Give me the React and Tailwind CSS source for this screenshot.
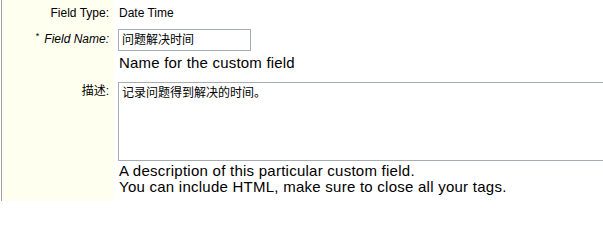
export default function App() {
  return (
    <div className="w-[603px] h-[201px] overflow-hidden bg-white pl-px" style={{ fontFamily: '"Liberation Sans", "Noto Sans CJK SC", sans-serif' }}>
      <div className="grid grid-cols-[112px_1fr] h-full border-l border-[#a0a0a0] text-black">
        <div className="bg-[#fffff0] text-[12px] leading-[14px] text-right pr-[5px]">
          <div className="pt-[6px] h-[28px]">Field Type:</div>
          <div className="pt-[4px] h-[53px]">
            <sup className="text-[9px] mr-[5px]">*</sup>
            <span className="italic">Field Name:</span>
          </div>
          <div className="pt-[3px]">描述:</div>
        </div>
        <div className="pl-[4px]">
          <div className="pt-[6px] h-[28px] pl-px text-[12px] leading-[14px]">Date Time</div>
          <div className="h-[53px]">
            <div className="w-[133px] h-[22px] border border-[#a5acb2] bg-white px-[3px] text-[12px] leading-[20px] mt-px">
              问题解决时间
            </div>
            <div className="pl-px text-[15px] leading-[20px] tracking-[0.2px] pt-[2px]">Name for the custom field</div>
          </div>
          <div className="w-[500px] h-[79px] border border-[#a5acb2] bg-white px-[3px] pt-[2px] text-[12px] leading-[16px]">
            记录问题得到解决的时间。
          </div>
          <div className="pl-px text-[15px] leading-[16px] tracking-[0.25px] pt-[2px]">
            <div>A description of this particular custom field.</div>
            <div>You can include HTML, make sure to close all your tags.</div>
          </div>
        </div>
      </div>
    </div>
  );
}
